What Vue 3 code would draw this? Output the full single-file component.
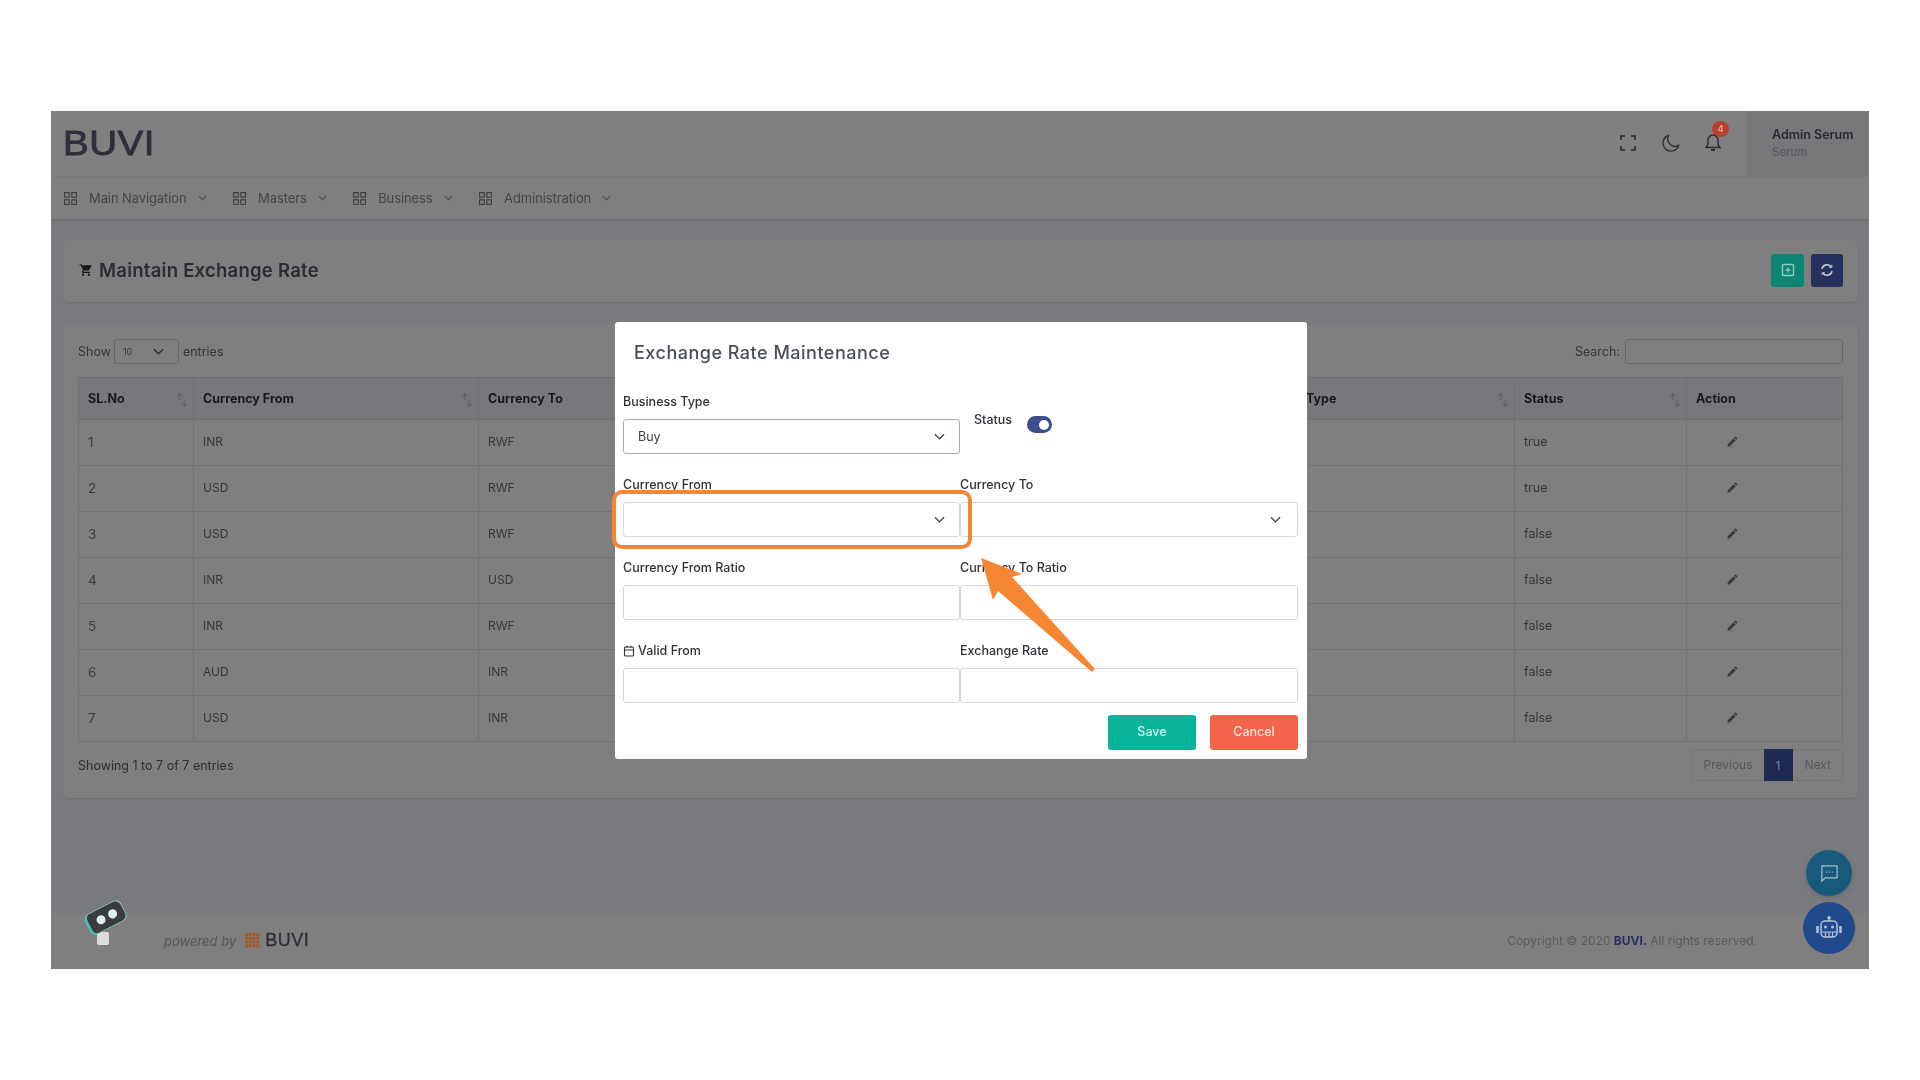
<script setup>
const menus = [
  { label: 'Main Navigation' },
  { label: 'Masters' },
  { label: 'Business' },
  { label: 'Administration' },
]
const rows = [
  { n: 1, from: 'INR', to: 'RWF', status: 'true' },
  { n: 2, from: 'USD', to: 'RWF', status: 'true' },
  { n: 3, from: 'USD', to: 'RWF', status: 'false' },
  { n: 4, from: 'INR', to: 'USD', status: 'false' },
  { n: 5, from: 'INR', to: 'RWF', status: 'false' },
  { n: 6, from: 'AUD', to: 'INR', status: 'false' },
  { n: 7, from: 'USD', to: 'INR', status: 'false' },
]
const dots = []
for (let y = 0; y < 4; y++) for (let x = 0; x < 4; x++) dots.push({ x: x * 4, y: y * 4 })
</script>

<template>
  <div class="page">
    <div class="frame">
      <header class="topbar">
        <div class="logo">BUVI</div>
        <div class="tools">
          <svg class="tool" viewBox="0 0 16 16" fill="none" stroke="#2b2c30" stroke-width="1.6"><path d="M1 5V1h4M11 1h4v4M15 11v4h-4M5 15H1v-4" /></svg>
          <svg class="tool moon" viewBox="0 0 18 18" fill="none" stroke="#2f3034" stroke-width="1.4"><path d="M6.5 1.5A8 8 0 1 0 16.6 11.5 7.5 7.5 0 0 1 6.5 1.5z" /></svg>
          <div class="bell">
            <svg viewBox="0 0 16 19" fill="none" stroke="#2b2c30" stroke-width="1.5"><path d="M1 14.5c1.5-1 2-2.500 2-4.500V7a5 5 0 0 1 10 0v3c0 2 .5 3.500 2 4.500z" /><path d="M6 17h4" stroke-width="2" /></svg>
            <span class="badge">4</span>
          </div>
        </div>
        <div class="user">
          <div class="uname">Admin Serum</div>
          <div class="urole">Serum</div>
        </div>
      </header>

      <nav class="menu">
        <div v-for="m in menus" :key="m.label" class="menu-item">
          <svg class="grid-ic" viewBox="0 0 13 13" fill="none" stroke="#3c3d41" stroke-width="1.1">
            <rect x=".6" y=".6" width="4.6" height="4.600" /><rect x="7.800" y=".6" width="4.600" height="4.600" />
            <rect x=".6" y="7.800" width="4.600" height="4.600" /><rect x="7.800" y="7.800" width="4.600" height="4.600" />
          </svg>
          <span>{{ m.label }}</span>
          <svg class="chev-s" viewBox="0 0 10 6" fill="none" stroke="#48494d" stroke-width="1.2"><path d="M1 1l4 4 4-4" /></svg>
        </div>
      </nav>

      <main class="content">
        <section class="card title-card">
          <svg class="cart" viewBox="0 0 24 24" fill="#18181a"><path d="M7 18a2 2 0 1 0 0 4 2 2 0 0 0 0-4zM1 2v2h2l3.600 7.590-1.350 2.450C4.520 15.370 5.480 17 7 17h12v-2H7.420a.25.25 0 0 1-.25-.25l.03-.12L8.100 13h7.450c.75 0 1.410-.41 1.750-1.030l3.580-6.490A1 1 0 0 0 20 4H5.210l-.94-2H1zm16 16a2 2 0 1 0 0 4 2 2 0 0 0 0-4z" /></svg>
          <h1>Maintain Exchange Rate</h1>
          <div class="title-actions">
            <button class="sq green">
              <svg viewBox="0 0 14 14" fill="none" stroke="#8fc9bd" stroke-width="1.400"><rect x="1.500" y="1.500" width="11" height="11" rx="1" /><path d="M7 4.500v5M4.500 7h5" /></svg>
            </button>
            <button class="sq navy">
              <svg viewBox="0 0 14 14" fill="none" stroke="#c4c8d6" stroke-width="1.600"><path d="M2 6a5 5 0 0 1 9-2.200M12 8a5 5 0 0 1-9 2.200" /><path d="M11.800 1.800v2.600H9.200M2.200 12.200V9.600h2.600" stroke-width="1" /></svg>
            </button>
          </div>
        </section>

        <section class="card table-card">
          <div class="controls">
            <div class="ctl">
              Show
              <div class="len"><span>10</span>
                <svg viewBox="0 0 12 7" fill="none" stroke="#2f3034" stroke-width="1.400"><path d="M1 1l5 5 5-5" /></svg>
              </div>
              entries
            </div>
            <div class="ctl">Search: <div class="search"></div></div>
          </div>

          <table>
            <colgroup>
              <col class="c1" /><col class="c2" /><col class="c3" /><col class="c4" /><col class="c5" /><col class="c6" />
            </colgroup>
            <thead>
              <tr>
                <th>SL.No<span class="sort"><i>↑</i><i>↓</i></span></th>
                <th>Currency From<span class="sort"><i>↑</i><i>↓</i></span></th>
                <th>Currency To</th>
                <th>Type<span class="sort"><i>↑</i><i>↓</i></span></th>
                <th>Status<span class="sort"><i>↑</i><i>↓</i></span></th>
                <th>Action</th>
              </tr>
            </thead>
            <tbody>
              <tr v-for="r in rows" :key="r.n">
                <td class="num">{{ r.n }}</td>
                <td>{{ r.from }}</td>
                <td>{{ r.to }}</td>
                <td></td>
                <td class="st">{{ r.status }}</td>
                <td class="act">
                  <svg viewBox="0 0 24 24" fill="#3a3b3f"><path d="M3 17.250V21h3.750L17.810 9.940l-3.750-3.750L3 17.250zM20.710 7.040a1 1 0 0 0 0-1.410l-2.340-2.340a1 1 0 0 0-1.410 0l-1.830 1.830 3.750 3.750 1.830-1.830z" /></svg>
                </td>
              </tr>
            </tbody>
          </table>

          <div class="tfoot">
            <div class="info">Showing 1 to 7 of 7 entries</div>
            <div class="pager">
              <span class="pg">Previous</span>
              <span class="pg cur">1</span>
              <span class="pg next">Next</span>
            </div>
          </div>
        </section>
      </main>

      <footer class="foot">
        <div class="powered">
          <em>powered by</em>
          <svg class="dots" viewBox="0 0 16 16"><rect v-for="(d, i) in dots" :key="i" :x="d.x" :y="d.y" width="3.200" height="3.200" rx=".6" fill="#a45a26" /></svg>
          <span class="buvi-s">BUVI</span>
        </div>
        <div class="copy">Copyright © 2020 <b>BUVI.</b> All rights reserved.</div>
      </footer>

      <div class="mascot">
        <div class="m-stem"></div>
        <div class="m-body"><span class="eye"></span><span class="eye"></span></div>
      </div>

      <button class="fab chat">
        <svg viewBox="0 0 20 20" fill="none" stroke="#a9bfca" stroke-width="1.300"><path d="M2 2h16v12.500H5.500L2 18z" /><path d="M6.500 8.500h1M9.500 8.500h1M12.500 8.500h1" /></svg>
      </button>
      <button class="fab bot">
        <svg viewBox="0 0 26 24" fill="none" stroke="#b6c4dc" stroke-width="1.500"><path d="M13 1v4" /><circle cx="13" cy="1.800" r="1" fill="#b6c4dc" /><rect x="5" y="5" width="16" height="16" rx="4" /><path d="M1.500 10v7M24.500 10v7" stroke-width="2.500" /><circle cx="9.500" cy="11" r="1.500" fill="#b6c4dc" stroke="none" /><circle cx="16.500" cy="11" r="1.500" fill="#b6c4dc" stroke="none" /><path d="M5 16h16M9.500 16v5M13 16v5M16.500 16v5" stroke-width="1.200" /></svg>
      </button>

      <div class="modal">
        <h2>Exchange Rate Maintenance</h2>
        <div class="form">
          <div class="field">
            <label>Business Type</label>
            <div class="ctrl active"><span>Buy</span><svg class="chev" viewBox="0 0 12 7" fill="none" stroke="#44454a" stroke-width="1.300"><path d="M1 1l5 5 5-5" /></svg></div>
          </div>
          <div class="status">
            <label>Status</label>
            <span class="toggle"><span class="knob"></span></span>
          </div>
          <div class="field">
            <label>Currency From</label>
            <div class="ctrl"><svg class="chev" viewBox="0 0 12 7" fill="none" stroke="#44454a" stroke-width="1.300"><path d="M1 1l5 5 5-5" /></svg></div>
          </div>
          <div class="field">
            <label>Currency To</label>
            <div class="ctrl wide-pad"><svg class="chev" viewBox="0 0 12 7" fill="none" stroke="#44454a" stroke-width="1.300"><path d="M1 1l5 5 5-5" /></svg></div>
          </div>
          <div class="field">
            <label>Currency From Ratio</label>
            <div class="ctrl"></div>
          </div>
          <div class="field">
            <label>Currency To Ratio</label>
            <div class="ctrl"></div>
          </div>
          <div class="field">
            <label class="with-ic">
              <svg viewBox="0 0 12 12" fill="none" stroke="#34353a" stroke-width="1.100"><rect x="1.500" y="2" width="9" height="9" rx="1" /><path d="M1.500 5h9M4 .8v2M8 .8v2" /></svg>
              Valid From
            </label>
            <div class="ctrl"></div>
          </div>
          <div class="field">
            <label>Exchange Rate</label>
            <div class="ctrl"></div>
          </div>
        </div>
        <div class="modal-actions">
          <button class="btn save">Save</button>
          <button class="btn cancel">Cancel</button>
        </div>
      </div>

      <div class="hl"></div>
      <svg class="arrow" viewBox="0 0 116 116">
        <path d="M1 1L42 17 32 20 115 112 112 115 18 34 13 43z" fill="#f58634" />
      </svg>
    </div>
  </div>
</template>

<style>
html, body { margin: 0; background: #fff; }
</style>

<style scoped>
* { box-sizing: border-box; }
.page {
  width: 1920px; height: 1080px; background: #fff; overflow: hidden;
  padding: 111px 0 0 51px;
  font-family: Inter, "Open Sans", sans-serif;
}
.frame {
  position: relative; width: 1818px; height: 858px; filter: blur(.45px);
  background: #7a7b7e; display: flex; flex-direction: column;
}
.topbar {
  height: 66px; flex: none; background: #808080; display: flex; align-items: center;
  border-bottom: 1px solid #787b79; padding-left: 12px;
}
.logo {
  font-family: "Liberation Sans", sans-serif; font-size: 35px; line-height: 1; color: #2f2e3b; margin-top: -2px;
  font-weight: 400; letter-spacing: .5px; -webkit-text-stroke: .9px #2f2e3b; transform: scaleX(1.1); transform-origin: left center;
}
.tools { margin-left: auto; display: flex; align-items: center; padding-bottom: 2px; }
.tool { width: 16px; height: 16px; display: block; }
.moon { width: 18px; height: 18px; margin-left: 26px; }
.bell { position: relative; width: 16px; height: 19px; margin-left: 25px; }
.bell svg { width: 16px; height: 19px; display: block; }
.badge {
  position: absolute; left: 7px; top: -12px; width: 17px; height: 16px; border-radius: 50%;
  background: #b8402c; color: #d9a59b; font-size: 9px; font-weight: 700; text-align: center; line-height: 16px;
}
.user {
  margin-left: 25px; width: 123px; height: 65px; background: #77787a; padding: 16px 0 0 26px;
}
.uname { font-size: 12.500px; font-weight: 600; color: #27282d; line-height: 16px; white-space: nowrap; margin-right: -6px; }
.urole { font-size: 11.500px; color: #55565c; line-height: 16px; margin-top: 1px; }

.menu {
  height: 43px; flex: none; background: #7f7f7f; display: flex; align-items: center; padding-left: 13px;
  border-bottom: 1px solid #707174; box-shadow: 0 1px 2px rgba(0,0,0,.08); color: #45464a; font-size: 13px; letter-spacing: -.1px;
}
.menu-item { display: flex; align-items: center; margin-right: 26.500px; }
.grid-ic { width: 13px; height: 13px; margin-right: 12px; }
.chev-s { width: 9px; height: 6px; margin-left: 11px; }

.content { flex: 1; padding: 20px 11px 0 12px; display: flex; flex-direction: column; gap: 23px; min-height: 0; }
.card { background: #7f7f7f; border-radius: 6px; box-shadow: 0 1px 2px rgba(0,0,0,.12); }
.title-card { height: 62px; flex: none; display: flex; align-items: center; padding: 0 15px 2px 16px; }
.cart { width: 14px; height: 14px; margin-right: 6px; }
h1 { margin: 0; font-size: 18.500px; font-weight: 600; color: #2b2c33; letter-spacing: .25px; white-space: nowrap; }
.title-actions { margin-left: auto; display: flex; gap: 7px; }
.sq { width: 33px; height: 33px; border: 0; border-radius: 3px; padding: 0; display: flex; align-items: center; justify-content: center; }
.sq svg { width: 14px; height: 14px; }
.sq.green { background: #0a8672; }
.sq.navy { background: #26305c; width: 32px; }

.table-card { height: 473px; flex: none; padding: 14px 15px 0 15px; }
.controls { display: flex; justify-content: space-between; align-items: center; height: 25px; margin-bottom: 13px; padding-right: 0; }
.ctl { display: flex; align-items: center; font-size: 12.500px; color: #34353a; padding-bottom: 0; }
.len {
  width: 65px; height: 25px; margin: 0 4px 0 3px; border: 1.500px solid #67686c; border-radius: 3px; display: flex;
  align-items: center; justify-content: space-between; padding: 0 14px 0 8px; font-size: 9px; color: #3a3b3f;
}
.len svg { width: 11px; height: 7px; }
.search { width: 218px; height: 25px; margin-left: 5px; border: 1.500px solid #67686c; border-radius: 3px; }

table { width: 1764px; table-layout: fixed; border-collapse: collapse; font-size: 12px; color: #36373b; }
.c1 { width: 115px; } .c2 { width: 285px; } .c3 { width: 818px; } .c4 { width: 218px; } .c5 { width: 172px; } .c6 { width: 156px; }
th, td { border: 1px solid #707174; padding: 0 9px; text-align: left; }
th { position: relative; height: 42px; background: #76787c; font-size: 12.500px; font-weight: 700; color: #17181c; padding-bottom: 1px; }
td { height: 46px; padding-bottom: 2px; }
td.num { font-size: 13.500px; color: #3c3d41; }
td.st { font-size: 12.500px; }
.sort { position: absolute; right: 5px; top: 14px; width: 12px; height: 18px; color: #5a5b60; font-size: 9px; font-weight: 400; }
.sort i { position: absolute; font-style: normal; line-height: 10px; }
.sort i:first-child { left: 0; top: 0; }
.sort i:last-child { right: 0; top: 7px; }
.act svg { width: 13px; height: 13px; display: block; margin-left: 30px; }

.tfoot { display: flex; justify-content: space-between; align-items: flex-start; margin-top: 7px; }
.info { font-size: 12.500px; color: #2e2f34; margin-top: 9px; }
.pager { display: flex; height: 32px; border: 1px solid #747579; border-radius: 3px; font-size: 12px; color: #58595e; }
.pg { display: flex; align-items: center; justify-content: center; padding: 0 11px 1px; }
.pg.cur { width: 29px; padding: 0; margin: -1px 0; background: #1f2a52; color: #77809c; }
.pg.next { padding: 0 11px 1px 12px; }

.foot {
  height: 55px; flex: none; background: #7f7f7f; display: flex; align-items: center; justify-content: space-between;
  padding: 0 112px 2px 113px;
}
.powered { display: flex; align-items: center; }
.powered em { font-size: 13px; color: #55565a; }
.dots { width: 15px; height: 15px; margin: 0 5px 0 9px; }
.buvi-s { font-family: "Liberation Sans", sans-serif; font-size: 18px; color: #2e2d3a; letter-spacing: .5px; -webkit-text-stroke: .3px #2e2d3a; }
.copy { font-size: 12px; color: #5a5b60; }
.copy b { color: #26305c; font-weight: 700; }

.mascot { position: absolute; left: 32px; top: 789px; width: 46px; height: 50px; }
.m-body {
  position: absolute; left: 2px; top: 6px; width: 41px; height: 23px; border-radius: 7px; background: #3b3c3e;
  border: 1.500px solid #8ccfc8; border-left: 3px solid #45c4bb; transform: rotate(-27deg);
  display: flex; align-items: center; justify-content: center; gap: 4px;
}
.eye { width: 9px; height: 9px; border-radius: 50%; background: #dfeeee; }
.m-stem { position: absolute; left: 14px; top: 32px; width: 12px; height: 13px; background: #dcdcdc; border-radius: 2px; }

.fab { position: absolute; border: 0; border-radius: 50%; padding: 0; display: flex; align-items: center; justify-content: center; }
.chat { left: 1755px; top: 739px; width: 46px; height: 46px; background: #175a7c; box-shadow: 0 2px 6px rgba(0,0,0,.15); }
.chat svg { width: 19px; height: 19px; }
.bot { left: 1752px; top: 791px; width: 52px; height: 52px; background: #214a8d; }
.bot svg { width: 26px; height: 24px; }

.modal {
  position: absolute; left: 564px; top: 211px; width: 692px; height: 437px; background: #fff; border-radius: 3px;
  padding: 0 9px 0 8px; display: flex; flex-direction: column;
}
h2 { margin: 0; height: 70px; padding: 16px 0 0 11px; font-size: 18px; line-height: 30px; font-weight: 500; color: #4a4f57; letter-spacing: .5px; }
.form { display: grid; grid-template-columns: 337px 338px; row-gap: 21px; }
.field { display: flex; flex-direction: column; height: 62px; }
label { display: block; height: 20px; line-height: 20px; font-size: 12.500px; font-weight: 500; color: #2f3136; margin-bottom: 7px; white-space: nowrap; }
.with-ic { display: flex; align-items: center; gap: 3px; }
.with-ic svg { width: 12px; height: 12px; }
.ctrl {
  height: 35px; border: 1.500px solid #d5d8de; border-radius: 3px; display: flex; align-items: center; justify-content: space-between;
  padding: 0 14px 1px 14px; font-size: 12.500px; color: #3c3f45; background: #fff;
}
.ctrl.wide-pad { padding-right: 16px; }
.ctrl.active { border-color: #a3aacb; }
.ctrl .chev { width: 11px; height: 7px; margin-left: auto; }
.status { display: flex; align-items: flex-start; padding: 18px 0 0 14px; }
.status label { margin: 0 15px 0 0; }
.toggle { display: block; width: 25px; height: 17px; margin-top: 6px; border-radius: 9px; background: #3c4f8c; position: relative; }
.knob { position: absolute; right: 3px; top: 3.500px; width: 10px; height: 10px; background: #fff; border-radius: 50%; }
.modal-actions { display: flex; justify-content: flex-end; gap: 14px; margin-top: 12px; }
.btn { width: 88px; height: 35px; border: 0; border-radius: 3px; padding: 0 0 2px; font-family: inherit; font-size: 12.500px; font-weight: 500; color: #d6f3ee; }
.save { background: #0ab49a; }
.cancel { background: #f2654a; color: #fde3dd; }

.hl { position: absolute; left: 561px; top: 379px; width: 360px; height: 59px; border: 4.500px solid #f58634; border-radius: 10px; }
.arrow { position: absolute; left: 929px; top: 446px; width: 116px; height: 116px; }
</style>
